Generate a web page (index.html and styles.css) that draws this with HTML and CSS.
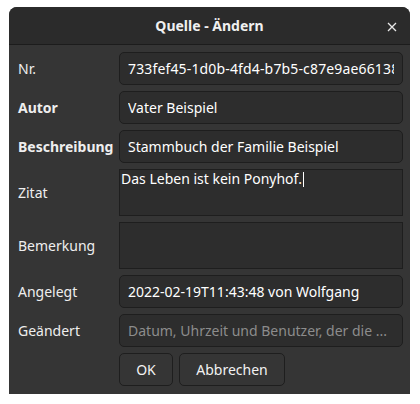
FILE: index.html
```html
<!DOCTYPE html>
<html lang="de">
<head>
<meta charset="utf-8">
<title>Quelle - Ändern</title>
<link rel="stylesheet" href="styles.css">
</head>
<body>
<div class="dialog">
  <div class="titlebar">
    <span class="title">Quelle - Ändern</span>
    <span class="close"><svg width="10" height="10" viewBox="0 0 10 10"><path d="M1 1 L9 9 M9 1 L1 9" stroke="#e8e8e8" stroke-width="1.3" fill="none"/></svg></span>
  </div>
  <div class="content">
    <div class="form">
      <div class="label">Nr.</div>
      <div class="entry"><span class="val uuid">733fef45-1d0b-4fd4-b7b5-c87e9ae66138</span></div>

      <div class="label bold">Autor</div>
      <div class="entry"><span class="val">Vater Beispiel</span></div>

      <div class="label bold">Beschreibung</div>
      <div class="entry"><span class="val">Stammbuch der Familie Beispiel</span></div>

      <div class="label">Zitat</div>
      <div class="textview"><span class="tv-text">Das Leben ist kein Ponyhof.</span><span class="cursor"></span></div>

      <div class="label">Bemerkung</div>
      <div class="textview"></div>

      <div class="label">Angelegt</div>
      <div class="entry"><span class="val">2022-02-19T11:43:48 von Wolfgang</span></div>

      <div class="label">Geändert</div>
      <div class="entry"><span class="val placeholder">Datum, Uhrzeit und Benutzer, der die ...</span></div>

      <div class="spacer"></div>
      <div class="buttons">
        <button class="btn btn-ok">OK</button>
        <button class="btn btn-cancel">Abbrechen</button>
      </div>
    </div>
  </div>
</div>
</body>
</html>
```

FILE: styles.css
```css
html, body {
  margin: 0;
  padding: 0;
  background: #ffffff;
}

body {
  font-family: "Noto Sans", "DejaVu Sans", sans-serif;
  font-size: 14px;
  color: #f2f2f2;
}

.dialog {
  margin: 7px 0 0 9px;
  width: 401px;
  height: 387px;
  background: #353535;
  border-radius: 8px 8px 0 0;
  overflow: hidden;
  display: flex;
  flex-direction: column;
}

.titlebar {
  height: 37px;
  flex: none;
  background: #2b2b2b;
  border-bottom: 1px solid #1c1c1c;
  display: flex;
  align-items: center;
  justify-content: center;
  position: relative;
}

.title {
  font-weight: bold;
  color: #f0f0f0;
}

.close {
  position: absolute;
  right: 13px;
  top: 15px;
  width: 10px;
  height: 10px;
  display: block;
}

.close svg {
  display: block;
}

.content {
  padding: 7px 7px 8px 9px;
}

.form {
  display: grid;
  grid-template-columns: 95px 1fr;
  grid-template-rows: 33px 33px 33px 47px 47px 33px 33px 33px;
  column-gap: 6px;
  row-gap: 6px;
}

.label {
  display: flex;
  align-items: center;
  white-space: nowrap;
  color: #eeeeee;
}

.label.bold {
  font-weight: bold;
}

.entry {
  box-sizing: border-box;
  background: #2d2d2d;
  border: 1px solid #1e1e1e;
  border-radius: 5px;
  padding: 0 8px;
  display: flex;
  align-items: center;
  overflow: hidden;
  white-space: nowrap;
}

.val {
  color: #ffffff;
  overflow: hidden;
}

.val.uuid {
  letter-spacing: 0.15px;
}

.val.placeholder {
  color: #8c8c8c;
}

.textview {
  box-sizing: border-box;
  background: #2d2d2d;
  border: 1px solid #1e1e1e;
  padding: 0 1px;
  line-height: 18px;
  white-space: nowrap;
}

.tv-text {
  color: #ffffff;
}

.cursor {
  display: inline-block;
  width: 1px;
  height: 15px;
  background: #ffffff;
  vertical-align: -3px;
  margin-left: 1px;
}

.buttons {
  display: flex;
  gap: 6px;
}

.btn {
  box-sizing: border-box;
  height: 33px;
  font-family: inherit;
  font-size: 14px;
  color: #f2f2f2;
  background: #353535;
  border: 1px solid #1e1e1e;
  border-radius: 5px;
  padding: 0;
}

.btn-ok {
  width: 54px;
}

.btn-cancel {
  width: 106px;
}
```
